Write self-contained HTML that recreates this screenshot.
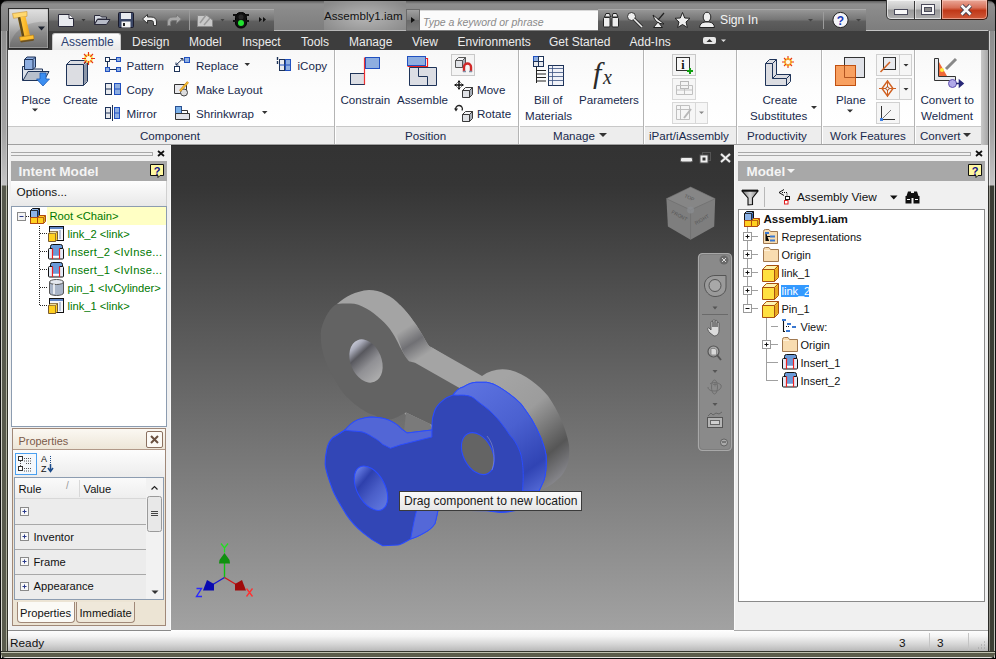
<!DOCTYPE html>
<html><head><meta charset="utf-8">
<style>
*{margin:0;padding:0;box-sizing:border-box}
html,body{width:996px;height:659px;overflow:hidden;background:#000}
body{position:relative;font-family:"Liberation Sans",sans-serif;font-size:12px;color:#000}
.a{position:absolute}
.t{position:absolute;white-space:nowrap;line-height:1}
.tab{top:35.5px;font-size:12px;color:#ececec}
.rl{font-size:11.6px;color:#18294c}
.sep{top:50px;width:2px;height:94px;background:#b4b4b4;border-right:1px solid #fff}
.tr{font-size:11.2px;color:#007800}
.trr{font-size:11px;color:#111}
svg{overflow:visible}
</style></head><body>
<!-- window frame -->
<div class="a" style="left:0;top:0;width:996px;height:659px;border-radius:7px 7px 6px 6px;background:linear-gradient(#5e5e5e,#8e8e8e 3px,#8a8a8a 9px,#7c7c7c 31px,#8a8a8a 60px,#8a8a8a);border:1px solid #111"></div>
<div class="a" style="left:1px;top:31px;width:7px;height:621px;background:linear-gradient(#8e8e8e 0px,#a4a4a4 100px,#c4c4c4 154px,#56584c 155px,#5a5c4e 100%)"></div>
<div class="a" style="left:1px;top:31px;width:1px;height:627px;background:linear-gradient(#a8a8a8,#d8d8d8 154px,#c8c8c0 155px,#d8d8d0)"></div>
<div class="a" style="left:6px;top:31px;width:1px;height:620px;background:linear-gradient(#b0b0b0,#c8c8c8 154px,#b8baa8 155px,#a8aa98)"></div>
<div class="a" style="left:7px;top:31px;width:1px;height:620px;background:linear-gradient(#4a4a4a,#505050 154px,#30322a 155px,#303028)"></div>
<div class="a" style="left:988px;top:31px;width:7px;height:621px;background:linear-gradient(#8e8e8e 0px,#a4a4a4 100px,#c4c4c4 154px,#3a3c34 155px,#3c3e34 100%)"></div>
<div class="a" style="left:988px;top:31px;width:1px;height:620px;background:linear-gradient(#4a4a4a,#505050 154px,#2a2a26 155px,#2a2a26)"></div>
<div class="a" style="left:989px;top:31px;width:1px;height:620px;background:linear-gradient(#d0d0d0,#e4e4e4 154px,#9a9a92 155px,#8a8a82)"></div>
<div class="a" style="left:994px;top:31px;width:1px;height:627px;background:linear-gradient(#a8a8a8,#d0d0d0 154px,#b8b8b0 155px,#c0c0b8)"></div>
<div class="a" style="left:1px;top:651px;width:994px;height:7px;background:linear-gradient(#33352c 0px,#33352c 1px,#c0c2b0 1px,#c0c2b0 2px,#5a5c4a 2px,#5c5e4c 6px,#e4e4e0 6px);border-radius:0 0 5px 5px"></div>
<!-- title glow -->
<div class="a" style="left:324px;top:1px;width:82px;height:30px;background:radial-gradient(ellipse 60% 70% at 50% 55%,#b4b4b4 0%,#a0a0a0 50%,#8a8a8a 100%)"></div>
<div class="a" style="left:274px;top:30px;width:132px;height:1px;background:#b8b8b8"></div>
<div class="t" style="left:324px;top:9.8px;font-size:11.6px;color:#111">Assembly1.iam</div>
<!-- QAT -->
<div class="a" style="left:49px;top:9px;width:225px;height:22px;border-top:1px solid #a8a8a8;background:linear-gradient(#969696,#767676 45%,#5e5e5e 55%,#545454)"></div>
<div class="a" style="left:189px;top:10px;width:1px;height:20px;background:#4a4a4a;border-right:1px solid #9a9a9a"></div>
<svg class="a" style="left:49px;top:9px" width="225" height="22" viewBox="49 9 225 22">
 <!-- new -->
 <path d="M58.5 14.5 H69 L73.5 18.5 V26.5 H58.5 Z" fill="#e8eaef" stroke="#2a2a3a"/>
 <path d="M69 14.5 V18.5 H73.5" fill="#fff" stroke="#2a2a3a"/>
 <path d="M81.5 19 L85.5 19 L83.5 21.5 Z" fill="#3a3a3a"/>
 <!-- open -->
 <path d="M94.5 15.5 H100 L101.5 17 H106.5 V19 H97.5 L94.5 24.5 Z" fill="#d8dce4" stroke="#2a2a3a"/>
 <path d="M97.5 19.5 H110 L106.5 24.5 H94.5 Z" fill="#b8bcc8" stroke="#2a2a3a"/>
 <!-- save -->
 <rect x="118.5" y="12.5" width="15" height="15" rx="1" fill="#3a4666" stroke="#1a1a2a"/>
 <rect x="121" y="13" width="10" height="6" fill="#e8eaef"/>
 <rect x="121.5" y="21.5" width="9" height="6" fill="#f4f4f4"/>
 <rect x="123" y="23" width="2" height="3" fill="#222"/>
 <!-- undo -->
 <path d="M142.5 19 L147.5 14.5 V17 H151 Q156.5 17 156.5 22 V25.5 H153.5 V22.5 Q153.5 20.5 151 20.5 H147.5 V23.5 Z" fill="#eee" stroke="#333"/>
 <!-- redo -->
 <path d="M181.5 19 L176.5 14.5 V17 H173 Q167.5 17 167.5 22 V25.5 H170.5 V22.5 Q170.5 20.5 173 20.5 H176.5 V23.5 Z" fill="#a8a8a8" stroke="#7a7a7a"/>
 <!-- update -->
 <path d="M197.5 15.5 H207 L212.5 20 V26.5 H197.5 Z" fill="#c8c8c8" stroke="#8a8a8a"/>
 <path d="M200 23 L206 15 M204 25 L210 18" stroke="#9a9a9a" stroke-width="1.5"/>
 <path d="M220.5 19 L224.5 19 L222.5 21.5 Z" fill="#444"/>
 <!-- traffic light -->
 <rect x="235.5" y="12.5" width="11" height="15.5" rx="5" fill="#111" stroke="#000"/>
 <path d="M233 15 H236 M246 15 H249 M233 21 H236 M246 21 H249" stroke="#111" stroke-width="2"/>
 <circle cx="241" cy="17" r="2.5" fill="#2a2a2a"/>
 <circle cx="241" cy="23" r="3" fill="#22e030"/>
 <path d="M259 17 L262 19.5 L259 22 Z M263 17 L266 19.5 L263 22 Z" fill="#111"/>
</svg>
<!-- search -->
<div class="a" style="left:406px;top:9px;width:14px;height:22px;border:1px solid #6a6a6a;background:linear-gradient(#a0a0a0,#7c7c7c 50%,#6a6a6a 51%,#7a7a7a)"></div>
<svg class="a" style="left:410px;top:16px" width="6" height="8"><path d="M1 1 L5 4 L1 7 Z" fill="#111"/></svg>
<div class="a" style="left:420px;top:10px;width:178px;height:20px;background:#fbfbfb;border-top:1px solid #d8d8d8"></div>
<div class="t" style="left:423px;top:16.6px;font-size:10.5px;font-style:italic;color:#8a8a8a">Type a keyword or phrase</div>
<div class="a" style="left:598px;top:9px;width:268px;height:22px;border-top:1px solid #a8a8a8;background:linear-gradient(#969696,#767676 45%,#5e5e5e 55%,#545454)"></div>
<div class="a" style="left:823px;top:12px;width:1px;height:17px;background:#4e4e4e;border-right:1px solid #9c9c9c"></div>
<svg class="a" style="left:598px;top:9px" width="268" height="22" viewBox="598 9 268 22">
 <!-- binoculars -->
 <path d="M604.5 17 L606 13.5 H609.5 L610.5 17 Z M612 17 L613 13.5 H616.5 L618 17 Z" fill="#e8e8e8" stroke="#222"/>
 <rect x="603.5" y="17.5" width="6.5" height="9.5" rx="1" fill="#eee" stroke="#222"/>
 <rect x="612" y="17.5" width="6.5" height="9.5" rx="1" fill="#eee" stroke="#222"/>
 <!-- key -->
 <circle cx="631.5" cy="16.5" r="4" fill="#eee" stroke="#333"/>
 <path d="M634 19 L642 27" stroke="#333" stroke-width="3.4"/>
 <path d="M634 19 L642 27" stroke="#eee" stroke-width="1.6"/>
 <!-- satellite -->
 <path d="M653 15 Q655 24 664 24 Z" fill="#eee" stroke="#222"/>
 <path d="M658 20 L664 13" stroke="#222" stroke-width="1.2"/>
 <path d="M653.5 27.5 L658 22 L662.5 27.5 Z" fill="#eee" stroke="#222"/>
 <!-- star -->
 <path d="M682.5 12.5 L684.7 18 L690 18.3 L686 22 L687.4 27.5 L682.5 24.5 L677.6 27.5 L679 22 L675 18.3 L680.3 18 Z" fill="#eee" stroke="#222"/>
 <!-- person -->
 <ellipse cx="707" cy="17" rx="3.8" ry="4.8" fill="#eee" stroke="#222"/>
 <path d="M699.5 27.5 Q700 22.5 705 22 H709 Q714 22.5 714.5 27.5 Z" fill="#eee" stroke="#222"/>
 <path d="M808 19 L813 19 L810.5 21.5 Z" fill="#444"/>
 <!-- help -->
 <circle cx="840.5" cy="20" r="7.6" fill="#f4f4f8" stroke="#222"/>
 <text x="840.5" y="24.5" font-family="Liberation Sans" font-weight="bold" font-size="12" fill="#1838b8" text-anchor="middle">?</text>
 <path d="M856 19 L861 19 L858.5 21.5 Z" fill="#444"/>
</svg>
<div class="t" style="left:720px;top:14px;font-size:12.2px;color:#f4f4f4">Sign In</div>
<!-- window buttons -->
<div class="a" style="left:886px;top:0;width:56px;height:20px;border:1px solid #3a3a3a;border-top:none;border-radius:0 0 0 5px;background:linear-gradient(#e4e4e4,#c4c4c4 45%,#9a9a9a 55%,#b0b0b0);box-shadow:inset 0 0 0 1px rgba(255,255,255,0.6)"></div>
<div class="a" style="left:914px;top:1px;width:1px;height:18px;background:#3a3a3a;box-shadow:1px 0 0 rgba(255,255,255,0.5)"></div>
<div class="a" style="left:941px;top:0;width:47px;height:20px;border:1px solid #3a1a10;border-top:none;border-radius:0 0 5px 0;background:linear-gradient(#eaa898,#d87058 40%,#c03818 55%,#d05a3a);box-shadow:inset 0 0 0 1px rgba(255,220,210,0.5)"></div>
<div class="a" style="left:895px;top:10px;width:12px;height:4px;background:#f8f8f8;box-shadow:0 0 0 1px #4a4a5a"></div>
<div class="a" style="left:922px;top:5px;width:12px;height:9px;border:2px solid #f8f8f8;box-shadow:0 0 0 1px #4a4a5a, inset 0 0 0 1px #4a4a5a;background:#8a8a8a"></div>
<svg class="a" style="left:959px;top:4px" width="14" height="12"><path d="M2.5 1.5 L11.5 10.5 M11.5 1.5 L2.5 10.5" stroke="#3a3a4a" stroke-width="4.4"/><path d="M2.5 1.5 L11.5 10.5 M11.5 1.5 L2.5 10.5" stroke="#f8f8f8" stroke-width="2.6"/></svg>
<div class="a" style="left:866px;top:30px;width:122px;height:1px;background:#c4c4c4"></div>
<!-- tab row -->
<div class="a" style="left:8px;top:31px;width:980px;height:19px;background:#3d3d3d"></div>
<div class="a" style="left:52px;top:33px;width:69px;height:18px;border-radius:3px 3px 0 0;background:linear-gradient(#fdfdfd,#e6e6e6);border:1px solid #c8c8c8;border-bottom:none"></div>
<div class="t tab" style="left:61px;top:35.5px;color:#2a4070">Assemble</div>
<div class="t tab" style="left:132px">Design</div>
<div class="t tab" style="left:189px">Model</div>
<div class="t tab" style="left:242px">Inspect</div>
<div class="t tab" style="left:301px">Tools</div>
<div class="t tab" style="left:349px">Manage</div>
<div class="t tab" style="left:412px">View</div>
<div class="t tab" style="left:457.5px">Environments</div>
<div class="t tab" style="left:549px">Get Started</div>
<div class="t tab" style="left:629.5px">Add-Ins</div>
<svg class="a" style="left:702px;top:36px" width="28" height="10"><rect x="1" y="1" width="13" height="7" rx="2" fill="#e8e8e8"/><path d="M4.5 6 L7.5 3 L10.5 6 Z" fill="#333"/><path d="M19 3.5 L24 3.5 L21.5 6 Z" fill="#ddd"/></svg>
<!-- app button -->
<div class="a" style="left:8px;top:8px;width:41px;height:41px;background:linear-gradient(#e0e0e0 0%,#c4c4c4 35%,#a0a0a0 60%,#7c7c7c 100%);border:1px solid #2a2a2a"></div>
<svg class="a" style="left:8px;top:8px" width="41" height="41" viewBox="8 8 41 41">
 <defs><clipPath id="abc"><rect x="9" y="9" width="39" height="39"/></clipPath>
 <linearGradient id="ig" x1="0" y1="0" x2="1" y2="0"><stop offset="0" stop-color="#ffd060"/><stop offset="0.5" stop-color="#ffc030"/><stop offset="1" stop-color="#e8a020"/></linearGradient></defs>
 <g clip-path="url(#abc)">
  <path d="M9 48 C12 30 28 20 48 22 L48 48 Z" fill="#000" opacity="0.12"/>
  <rect x="9" y="9" width="39" height="39" fill="none" stroke="#bdbdbd" stroke-width="1"/>
 </g>
  <path d="M12.5 13.5 L27 11.5 L27 16.3 L13.5 18.3 Z" fill="#ffd870" stroke="#c89030" stroke-width="0.6"/>
 <path d="M17.8 17.5 L25.5 16.4 L30.2 36 L22 37.2 Z" fill="url(#ig)"/>
 <path d="M17.8 17.5 L20.3 17.1 L24.5 36.8 L22 37.2 Z" fill="#3a2c10" opacity="0.8"/>
 <path d="M19.5 37 L33.5 35 L34 39 L20.3 41 Z" fill="#ffc030" stroke="#b07818" stroke-width="0.6"/>
 <path d="M20.3 41 L34 39 L33.6 40.8 L21 42.6 Z" fill="#6a4a10" opacity="0.85"/>
 <path d="M38 26.5 L45 26.5 L41.5 30.5 Z" fill="#1e2430"/>
</svg>
<!-- ribbon body -->
<div class="a" style="left:8px;top:50px;width:973px;height:77px;background:linear-gradient(#f8f8f8,#fdfdfd 50%,#fff)"></div>
<div class="a" style="left:8px;top:126px;width:973px;height:19px;background:#ededed;border-top:1px solid #c8c8c8;border-bottom:1px solid #a0a0a0"></div>
<div class="a" style="left:981px;top:50px;width:7px;height:95px;background:linear-gradient(90deg,#c8c8c8,#a8a8a8)"></div>
<!-- separators -->
<div class="a sep" style="left:334px"></div>
<div class="a sep" style="left:518px"></div>
<div class="a sep" style="left:643px"></div>
<div class="a sep" style="left:736px"></div>
<div class="a sep" style="left:821px"></div>
<div class="a sep" style="left:914px"></div>
<!-- panel labels -->
<div class="t rl" style="left:140px;top:129.7px">Component</div>
<div class="t rl" style="left:405px;top:129.7px">Position</div>
<div class="t rl" style="left:553px;top:129.7px">Manage</div>
<div class="t rl" style="left:649px;top:129.7px">iPart/iAssembly</div>
<div class="t rl" style="left:747px;top:129.7px">Productivity</div>
<div class="t rl" style="left:830px;top:129.7px">Work Features</div>
<div class="t rl" style="left:920px;top:129.7px">Convert</div>
<svg class="a" style="left:598px;top:131px" width="10" height="8"><path d="M1 2 L9 2 L5 6 Z" fill="#333"/></svg>
<svg class="a" style="left:962px;top:131px" width="10" height="8"><path d="M1 2 L9 2 L5 6 Z" fill="#333"/></svg>
<!-- big labels -->
<div class="t rl" style="left:21.5px;top:93.7px">Place</div>
<div class="t rl" style="left:63px;top:93.7px">Create</div>
<div class="t rl" style="left:340.5px;top:93.7px">Constrain</div>
<div class="t rl" style="left:397px;top:93.7px">Assemble</div>
<div class="t rl" style="left:534px;top:93.7px">Bill of</div>
<div class="t rl" style="left:525px;top:109.5px">Materials</div>
<div class="t rl" style="left:579px;top:93.7px">Parameters</div>
<div class="t rl" style="left:762.5px;top:93.7px">Create</div>
<div class="t rl" style="left:750px;top:109.5px">Substitutes</div>
<div class="t rl" style="left:836px;top:93.7px">Plane</div>
<div class="t rl" style="left:920.5px;top:93.7px">Convert to</div>
<div class="t rl" style="left:921px;top:109.5px">Weldment</div>
<!-- small labels -->
<div class="t rl" style="left:126.5px;top:60px">Pattern</div>
<div class="t rl" style="left:126.5px;top:83.7px">Copy</div>
<div class="t rl" style="left:126.5px;top:107.7px">Mirror</div>
<div class="t rl" style="left:196px;top:60px">Replace</div>
<div class="t rl" style="left:196px;top:83.7px">Make Layout</div>
<div class="t rl" style="left:196px;top:107.7px">Shrinkwrap</div>
<div class="t rl" style="left:297.5px;top:60px">iCopy</div>
<div class="t rl" style="left:477px;top:83.7px">Move</div>
<div class="t rl" style="left:477px;top:107.7px">Rotate</div>
<svg class="a" style="left:0;top:50px" width="996" height="77" viewBox="0 50 996 77">
 <!-- dropdown arrows -->
 <path d="M32 108.5 H38 L35 111.5 Z M244.5 63 H250 L247.3 66 Z M262 111 H267.5 L264.7 114 Z M811 106 H817 L814 109 Z M847 109.5 H853 L850 112.5 Z" fill="#333"/>
 <!-- Place icon -->
 <path d="M22.5 66.5 H31 L33 69 H42.5 V80.5 H22.5 Z" fill="#dde2ea" stroke="#1e3358"/>
 <path d="M23 80.5 L28 71.5 H49 L44 80.5 Z" fill="#b8c0cc" stroke="#1e3358"/>
 <path d="M24.5 59.5 L27 57 H35.5 V67 L33 69.5 H24.5 Z" fill="#8eaee0" stroke="#1e3358"/>
 <path d="M24.5 59.5 H33 L35.5 57 M33 59.5 V69.5" fill="none" stroke="#1e3358"/>
 <path d="M40 73 H46 V79 H49.5 L43 86 L36.5 79 H40 Z" fill="#3c8ef0" stroke="#1a5ab8" stroke-width="0.8"/>
 <!-- Create icon -->
 <path d="M66.5 64.5 L70.5 60.5 H87.5 V81.5 L83.5 85.5 H66.5 Z" fill="#dcdde2" stroke="#1e3358"/>
 <path d="M66.5 64.5 H83.5 L87.5 60.5 M83.5 64.5 V85.5" fill="none" stroke="#1e3358"/>
 <path d="M84 65 L87 62 V81 L84 84.5 Z" fill="#8c96a8"/>
 <circle cx="88.5" cy="58.5" r="4.5" fill="#ffec40"/>
 <path d="M88.5 52 V65 M82 58.5 H95 M84 54 L93 63 M93 54 L84 63" stroke="#e83818" stroke-width="1.2"/>
 <circle cx="88.5" cy="58.5" r="2.5" fill="#fffbe0"/>
 <!-- Pattern -->
 <rect x="105.5" y="57.5" width="4" height="4" fill="#fff" stroke="#1e3358"/>
 <rect x="116.5" y="57.5" width="4" height="4" fill="#8eaee0" stroke="#2050c0"/>
 <rect x="105.5" y="67.5" width="4" height="4" fill="#8eaee0" stroke="#2050c0"/>
 <rect x="116.5" y="67.5" width="4" height="4" fill="#8eaee0" stroke="#2050c0"/>
 <path d="M110 59.5 H116 M110 69.5 H116 M107.5 62 V67" stroke="#1e3358"/>
 <!-- Copy -->
 <rect x="105.5" y="83.5" width="6" height="11" fill="#e8eaee" stroke="#1e3358"/>
 <path d="M105.5 89 H111.5" stroke="#1e3358"/>
 <rect x="114.5" y="83.5" width="6" height="11" fill="#8eaee0" stroke="#2050c0"/>
 <path d="M114.5 89 H120.5" stroke="#2050c0"/>
 <!-- Mirror -->
 <rect x="105.5" y="107.5" width="5" height="11" fill="#e8eaee" stroke="#1e3358"/>
 <path d="M105.5 113 H110.5" stroke="#1e3358"/>
 <rect x="114.5" y="107.5" width="5" height="11" fill="#8eaee0" stroke="#2050c0"/>
 <path d="M114.5 113 H119.5" stroke="#2050c0"/>
 <path d="M112.5 105 V121" stroke="#1e3358"/>
 <!-- Replace -->
 <rect x="174.5" y="66.5" width="5" height="5" fill="#fff" stroke="#1e3358"/>
 <rect x="184.5" y="57.5" width="5" height="5" fill="#8eaee0" stroke="#2050c0"/>
 <path d="M176 65 L183 58.5 M176 65 V62.5 M176 65 H178.5 M183 58.5 H180.5 M183 58.5 V61" stroke="#1e3358"/>
 <!-- Make layout -->
 <path d="M174.5 84.5 H186.5 V93.5 H174.5 Z" fill="#e8e8ec" stroke="#333"/>
 <circle cx="184" cy="92.5" r="3.5" fill="#ddd" stroke="#444"/>
 <path d="M180 91 L188 82" stroke="#c88020" stroke-width="2.4"/>
 <path d="M180 91 L188 82" stroke="#f4c030" stroke-width="1.2"/>
 <!-- Shrinkwrap -->
 <rect x="175.5" y="106.5" width="6" height="7" fill="#7ab0e8" stroke="#2a5090"/>
 <path d="M175.5 113.5 H189.5 V119.5 H175.5 Z" fill="#e0e2e8" stroke="#333"/>
 <path d="M181.5 110.5 H187.5 V113.5" fill="none" stroke="#333"/>
 <!-- iCopy -->
 <path d="M277.5 57 V60 M277.5 61 V64" stroke="#1e3358" stroke-width="1.4"/>
 <rect x="279.5" y="59.5" width="5" height="11" fill="#e8eaee" stroke="#1e3358"/>
 <rect x="285.5" y="59.5" width="5" height="11" fill="#8eaee0" stroke="#2050c0"/>
 <path d="M279.5 65 H290.5" stroke="#2050c0"/>
 <!-- Constrain -->
 <rect x="350.5" y="73.5" width="14" height="11" fill="#dcdee4" stroke="#1e3358"/>
 <rect x="365.5" y="57.5" width="14" height="11" fill="#8eaee0" stroke="#2050c0"/>
 <path d="M364.5 57.5 V84.5" stroke="#f03030" stroke-width="1.2"/>
 <!-- Assemble -->
 <path d="M409.5 67.5 H436.5 V85.5 H409.5 Z" fill="#dcdee4" stroke="#1e3358"/>
 <path d="M418.5 67.5 V76.5 H427.5 V85.5" fill="none" stroke="#1e3358"/>
 <rect x="407.5" y="56.5" width="18" height="9" fill="#8eaee0" stroke="#2050c0"/>
 <path d="M407.5 66.5 H427.5 V58.5 H425.5" fill="none" stroke="#f02020" stroke-width="1.2"/>
 <!-- magnet button -->
 <rect x="451.5" y="54.5" width="23" height="21" fill="#f4f4f4" stroke="#c8c8c8"/>
 <path d="M455.5 60.5 H462.5 V67.5 H455.5 Z" fill="#e0e2e6" stroke="#555"/><path d="M455.5 60.5 L458.5 57.5 H465.5 L462.5 60.5 Z" fill="#f4f4f6" stroke="#555"/><path d="M462.5 60.5 L465.5 57.5 V64.5 L462.5 67.5 Z" fill="#a8aeb8" stroke="#555"/>
 <path d="M464 72 V67 A3.5 3.5 0 0 1 471 67 V72" fill="none" stroke="#d02828" stroke-width="2.4"/>
 <path d="M463 71.5 H466 M469 71.5 H472" stroke="#8090a8" stroke-width="1.4"/>
 <!-- move -->
 <path d="M459 80.5 V89.5 M454.5 85 H463.5" stroke="#111" stroke-width="1.4"/>
 <path d="M457.5 82.5 L459 81 L460.5 82.5 M457.5 87.5 L459 89 L460.5 87.5 M456.5 83.5 L455 85 L456.5 86.5 M461.5 83.5 L463 85 L461.5 86.5" fill="none" stroke="#111"/>
 <path d="M462.5 90.5 H469.5 V97.5 H462.5 Z" fill="#e0e2e6" stroke="#3a3a3a"/><path d="M462.5 90.5 L465.5 87.5 H472.5 L469.5 90.5 Z" fill="#f4f4f6" stroke="#3a3a3a"/><path d="M469.5 90.5 L472.5 87.5 V94.5 L469.5 97.5 Z" fill="#a8aeb8" stroke="#3a3a3a"/>
 <!-- rotate -->
 <path d="M455.8 110 A3.4 3.4 0 1 1 462 110.5" fill="none" stroke="#222" stroke-width="1.3"/><path d="M454 108.5 L456 111.5 L458 108.5 Z" fill="#222"/>
 <path d="M462.5 114.5 H469.5 V121.5 H462.5 Z" fill="#e0e2e6" stroke="#3a3a3a"/><path d="M462.5 114.5 L465.5 111.5 H472.5 L469.5 114.5 Z" fill="#f4f4f6" stroke="#3a3a3a"/><path d="M469.5 114.5 L472.5 111.5 V118.5 L469.5 121.5 Z" fill="#a8aeb8" stroke="#3a3a3a"/>
 <!-- BOM -->
 <rect x="533.5" y="56.5" width="5" height="5" fill="#8eaee0" stroke="#2050c0"/>
 <rect x="538.5" y="56.5" width="5" height="5" fill="#fff" stroke="#1e3358"/>
 <rect x="533.5" y="61.5" width="5" height="5" fill="#e8eaee" stroke="#1e3358"/>
 <rect x="538.5" y="61.5" width="5" height="5" fill="#e8eaee" stroke="#1e3358"/>
 <path d="M536.5 67 V83 M536.5 70.5 H546 M536.5 74 H546 M536.5 77.5 H546 M536.5 81 H546" stroke="#222"/>
 <rect x="548.5" y="65.5" width="15" height="20" fill="#f0f2f8" stroke="#1e3358"/>
 <path d="M548.5 68.5 H563.5 M548.5 72.5 H563.5 M548.5 76.5 H563.5 M548.5 80.5 H563.5 M552.5 65.5 V85.5" stroke="#3a5080" stroke-width="0.8"/>
 <!-- fx -->
 <text x="593" y="83" font-family="Liberation Serif" font-style="italic" font-size="30" fill="#2a2a2a">f</text>
 <text x="603" y="84" font-family="Liberation Serif" font-style="italic" font-size="20" fill="#2a2a2a">x</text>
 <!-- iPart buttons -->
 <rect x="672.5" y="54.5" width="23" height="21" fill="#f4f4f4" stroke="#c8c8c8"/>
 <rect x="676.5" y="57.5" width="13" height="13" fill="#f8f8f8" stroke="#333"/>
 <text x="683" y="68.5" font-family="Liberation Serif" font-weight="bold" font-size="12" fill="#111" text-anchor="middle">i</text>
 <path d="M690 68 V74 M687 71 H693" stroke="#10a010" stroke-width="2"/>
 <rect x="672.5" y="78.5" width="23" height="21" fill="#f6f6f6" stroke="#d8d8d8"/>
 <rect x="680.5" y="81.5" width="8" height="7" fill="#f4f4f4" stroke="#b8b8b8"/>
 <path d="M676.5 85.5 H692.5 V94.5 H676.5 Z M676.5 90 H692.5 M684.5 88.5 V94.5" fill="none" stroke="#c0c0c0"/>
 <rect x="672.5" y="102.5" width="35" height="21" fill="#f6f6f6" stroke="#d8d8d8"/>
 <path d="M695.5 102.5 V123.5" stroke="#d8d8d8"/>
 <path d="M676.5 105.5 H689.5 V119.5 H676.5 Z M676.5 109.5 H689.5 M680.5 105.5 V119.5" fill="none" stroke="#c0c0c0"/>
 <path d="M684 118 L691 109" stroke="#b8b8b8" stroke-width="2"/>
 <path d="M699 111.5 H704 L701.5 114 Z" fill="#888"/>
 <!-- Create substitutes -->
 <path d="M765.5 63.5 L769.5 59.5 H776.5 V74.5 H790.5 V81.5 L786.5 85.5 H765.5 Z" fill="#dcdde2" stroke="#1e3358"/>
 <path d="M765.5 63.5 H772.5 L776.5 59.5 M772.5 63.5 V78.5 H786.5 V85.5 M772.5 78.5 L776.5 74.5 M786.5 78.5 L790.5 74.5" fill="none" stroke="#1e3358"/>
 <circle cx="788" cy="62" r="4.2" fill="#ffec40"/>
 <path d="M788 56 V68 M782 62 H794 M784 58 L792 66 M792 58 L784 66" stroke="#e83818" stroke-width="1.1"/>
 <circle cx="788" cy="62" r="2.3" fill="#fffbe0"/>
 <!-- Plane -->
 <rect x="844.5" y="57.5" width="20" height="20" fill="#e0e2e8" stroke="#333"/>
 <rect x="835.5" y="65.5" width="20" height="20" fill="#f8a060" stroke="#c05010"/>
 <path d="M844.5 65.5 V77.5 H855.5" fill="none" stroke="#a04010" stroke-width="0.8"/>
 <!-- work feature small buttons -->
 <rect x="876.5" y="54.5" width="35" height="21" fill="#f6f6f6" stroke="#d0d0d0"/>
 <path d="M899.5 54.5 V75.5" stroke="#d0d0d0"/>
 <rect x="883.5" y="57.5" width="12" height="12" fill="#e8eaee" stroke="#333"/>
 <path d="M880.5 72 L890 62" stroke="#d06020" stroke-width="1.5"/>
 <path d="M903.5 64 H908.5 L906 66.5 Z" fill="#333"/>
 <rect x="876.5" y="78.5" width="35" height="21" fill="#f6f6f6" stroke="#d0d0d0"/>
 <path d="M899.5 78.5 V99.5" stroke="#d0d0d0"/>
 <path d="M887.5 81 L893 88.5 L887.5 96 L882 88.5 Z" fill="none" stroke="#d06020" stroke-width="1.4"/>
 <path d="M887.5 80 V97 M879 88.5 H896" stroke="#d06020" stroke-width="1"/>
 <circle cx="887.5" cy="88.5" r="1.6" fill="#fff" stroke="#a04010"/>
 <path d="M903.5 88 H908.5 L906 90.5 Z" fill="#333"/>
 <rect x="876.5" y="102.5" width="23" height="21" fill="#f6f6f6" stroke="#d0d0d0"/>
 <path d="M881.5 106 V119.5 H895" fill="none" stroke="#333"/>
 <path d="M881.5 119.5 L891 110" stroke="#555" stroke-width="0.8"/>
 <rect x="880" y="118" width="3" height="3" fill="#4080e0"/>
 <!-- Convert to weldment -->
 <path d="M934.5 58.5 H938.5 V76.5 H955.5 V80.5 H934.5 Z" fill="#e8eaee" stroke="#333"/>
 <path d="M939 62 L947 76 H939 Z" fill="#f06838"/>
 <path d="M946 69 L956 59" stroke="#888" stroke-width="3"/>
 <circle cx="942" cy="70" r="2" fill="#ffec40"/>
 <circle cx="952.5" cy="83.5" r="4" fill="#b0a8e8" stroke="#6050b0"/>
 <path d="M956 83.5 H962 M959.5 80.5 L963 83.5 L959.5 86.5 Z" stroke="#282878" stroke-width="1.6" fill="#282878"/>
</svg>
<!-- viewport -->
<div class="a" style="left:171px;top:145px;width:563px;height:485px;background:linear-gradient(#333 0%,#353535 8%,#a2a2a2 100%);border-top:1px solid #2a2a2a"></div>
<svg class="a" style="left:171px;top:145px" width="563" height="485" viewBox="171 145 563 485">
 <defs>
  <linearGradient id="gth" gradientUnits="userSpaceOnUse" x1="500" y1="380" x2="575" y2="470"><stop offset="0" stop-color="#a4a4a4"/><stop offset="0.35" stop-color="#9c9c9c"/><stop offset="0.75" stop-color="#565656"/><stop offset="1" stop-color="#8c8c92"/></linearGradient>
  <linearGradient id="gneck" gradientUnits="userSpaceOnUse" x1="404" y1="329" x2="422" y2="357"><stop offset="0" stop-color="#a4a4a4"/><stop offset="0.5" stop-color="#707074"/><stop offset="1" stop-color="#a4a4a4"/></linearGradient>
  <linearGradient id="grl" gradientUnits="userSpaceOnUse" x1="520" y1="395" x2="575" y2="480"><stop offset="0" stop-color="#a2a2a2"/><stop offset="0.35" stop-color="#8e8e8e"/><stop offset="0.7" stop-color="#545454"/><stop offset="1" stop-color="#8c8c94"/></linearGradient>
  <linearGradient id="ghole" gradientUnits="userSpaceOnUse" x1="358" y1="340" x2="374" y2="383"><stop offset="0" stop-color="#c8cad8"/><stop offset="0.12" stop-color="#a8aab8"/><stop offset="0.3" stop-color="#58585e"/><stop offset="0.6" stop-color="#909094"/><stop offset="1" stop-color="#b0b0b0"/></linearGradient>
  <linearGradient id="brl" gradientUnits="userSpaceOnUse" x1="470" y1="385" x2="545" y2="490"><stop offset="0" stop-color="#5c72e0"/><stop offset="0.45" stop-color="#4a60d0"/><stop offset="0.8" stop-color="#3044b4"/><stop offset="1" stop-color="#566cd8"/></linearGradient>
  <linearGradient id="bhole" gradientUnits="userSpaceOnUse" x1="362" y1="467" x2="380" y2="510"><stop offset="0" stop-color="#6a80e8"/><stop offset="0.28" stop-color="#2e40ac"/><stop offset="0.6" stop-color="#4a5ec8"/><stop offset="1" stop-color="#6078e0"/></linearGradient>
 </defs>
 <!-- gray link -->
 <path d="M337 304 C345 297 355 291 369 290 C380 290 392 296 400 305 C410 315 418 327 423 336 C427 343 429 347 431 347 L461 364 L482 376 C490 370 500 368 510 370 C525 374 540 386 548 396 C558 410 566 428 569 445 C570 458 568 468 562 475 C556 482 548 487 543 489 L480 470 L410 420 L337 330 Z" fill="url(#gth)"/>
 <path d="M400 305 C410 315 418 327 423 336 C427 343 429 347 431 347 L446 356 L418 364 L409.1 361.3 C406 358 404 354 402 350 L392 322 Z" fill="url(#gneck)"/>
 
 <path d="M337 304 C330 307 324 318 321 330 C320 342 322 355 330 371 C337 385 345 396 348 398 C356 406 366 413 374 415 C380 418 385 419.5 389 419.5 C395 419 399 416 401 415 L406 412.6 L430 424 L470 440 L520 420 L457.7 387 L415 362.8 L409 361.3 C405 357 402 350 400 347 C396 338 390 327 381 319.5 C372 311 360 303 349.5 303.5 C344 303.5 340 303 337 304 Z" fill="#636363"/>
 <path d="M404 431.6 L406 412.6 L430.3 424 L432 430 L413.7 434.6 Z" fill="#7a7a7a"/>
 <ellipse cx="366" cy="361" rx="15.5" ry="22.5" transform="rotate(-22 366 361)" fill="url(#ghole)"/>
 <!-- blue link silhouette -->
 <path d="M326.7 449.8 C328 443 330 440 332.8 437.7 L345 430 C350 424 356 419.5 361.6 418.7 C366 417.3 370 417 373.7 417.2 C380 417.5 385 418.5 389 420.2 C395 423 399 426 401 428.6 L407 433 L431.9 430 C432 425 432.3 420 432.6 418 C434 412 435 409 436.4 407.3 C440 402 447 397 453 395 C456 391 459 388 463.7 386.8 C468 384 472 382.5 476 382.3 L486.5 382.3 C491 383 495 384.5 500 387.6 C507 392 514 397 521 404 C525 409 528 414 531.6 419.2 C535 425 538 431 540.7 437.4 C543 443 545 449 546 455 C546.5 462 546 470 545.2 474.9 C544.5 479 543.5 482 542.2 484 L539 491 L530 505 C520 510 510 512.5 500 512.4 L486.5 510.8 L438 510 C437 515 436 520 434.9 523.7 C432 528 428 531 424.3 532.8 C419 536 414 538 410.6 539 C405 542 400 545 398 545 L382.8 545.7 C375 542 368 537 363.1 532.8 C356 527 350 520 346.4 514.6 C341 506 336 498 332.8 490.3 C329 480 326 472 325.2 465 C325 458 326 453 326.7 449.8 Z" fill="#3246b6" stroke="#2a4cff" stroke-width="1.1"/>
 <!-- left lobe top band + bar band -->
 <path d="M332.8 437.7 L345 430 C350 424 356 419.5 361.6 418.7 C366 417.3 370 417 373.7 417.2 C380 417.5 385 418.5 389 420.2 C395 423 399 426 401 428.6 L407 433 L431.9 430 L431.9 437 L400 445 L390.4 448.3 C386 446 384 445 382.8 444.5 C378 440 376 439 373.7 437.7 C368 434 364 432 360 431.6 C354 431 349 431 344.9 430 Z" fill="#5266d6" stroke="#2a4cff" stroke-width="1"/>
 <!-- right lobe band -->
 <path d="M453 395 C456 391 459 388 463.7 386.8 C468 384 472 382.5 476 382.3 L486.5 382.3 C491 383 495 384.5 500 387.6 C507 392 514 397 521 404 C525 409 528 414 531.6 419.2 C535 425 538 431 540.7 437.4 C543 443 545 449 546 455 C546.5 462 546 470 545.2 474.9 C544.5 479 543.5 482 542.2 484 L539 491 L522.5 491 C523 485 523.3 478 523.2 473.4 C523 465 522 460 521 455 C519.5 450 518 447 516.4 444 C514 440 512 437 510.3 435.9 C507 431 505 428 502.8 425.3 C499 420 495 416 492.1 413.1 C488 409 484 406 480 403.2 C476 400 474 398 471.3 396.7 C467 395 462 395 457.7 395.2 Z" fill="url(#brl)" stroke="#2a4cff" stroke-width="1"/>
 <path d="M416.7 510 L438 510 C437 515 436 520 434.9 523.7 C432 528 428 531 424.3 532.8 C419 536 414 538 410.6 539 C412 532 414 520 416.7 510 Z" fill="#5468d8" stroke="#2a4cff" stroke-width="1"/>
 <ellipse cx="371" cy="488.2" rx="14" ry="24" transform="rotate(-28 371 488.2)" fill="url(#bhole)" stroke="#2a4cff" stroke-width="1.1"/>
 <ellipse cx="477.8" cy="453.6" rx="14.5" ry="22.3" transform="rotate(-27 477.8 453.6)" fill="#646464" stroke="#2a4cff" stroke-width="1.1"/>
 <path d="M487 436 C494 444 496 458 492 470" fill="none" stroke="#c8c8d8" stroke-width="1" opacity="0.35"/>
<!-- axis triad -->
 <path d="M224.5 577.5 V562" stroke="#10c010" stroke-width="1.4"/>
 <path d="M224.5 577.5 L212 585" stroke="#1818d0" stroke-width="1.4"/>
 <path d="M224.5 577.5 L237 585" stroke="#d01818" stroke-width="1.4"/>
 <path d="M224.5 553 L229.5 560 L230 563.5 H219 L219.5 560 Z" fill="#109010"/>
 <path d="M203 590.5 L207 580 L214 584 V590.5 Z" fill="#0a0ab0"/>
 <path d="M246 590.5 L242 580 L235 584 V590.5 Z" fill="#a00a0a"/>
 <path d="M221 543.5 L224.5 548 L228 543.5 M224.5 548 V552.5" fill="none" stroke="#20e020" stroke-width="1.3"/>
 <path d="M196.5 588.5 H201.5 L196.5 596.5 H202" fill="none" stroke="#2a2aff" stroke-width="1.4"/>
 <path d="M246.5 588.5 L252.5 596.5 M252.5 588.5 L246.5 596.5" fill="none" stroke="#ff3030" stroke-width="1.3"/>
 <!-- view cube -->
 <path d="M690.6 187 L715.2 198.7 L714.2 226.4 L690.6 239.7 L667.9 226.4 L666.4 198.7 Z" fill="#7e7e7e"/>
 <path d="M690.6 187 L715.2 198.7 L690.6 210 L666.4 198.7 Z" fill="#868686" stroke="#6a6a6a" stroke-width="0.6"/>
 <path d="M690.6 210 V239.7" stroke="#6a6a6a" stroke-width="0.6"/>
 <circle cx="690.6" cy="210" r="3.5" fill="#8a8c90" opacity="0.8"/>
 <text x="0" y="0" font-family="Liberation Sans" font-size="5" fill="#555" transform="translate(684 197) rotate(25)">TOP</text>
 <text x="0" y="0" font-family="Liberation Sans" font-size="5" fill="#555" transform="translate(671 213) rotate(28)">FRONT</text>
 <text x="0" y="0" font-family="Liberation Sans" font-size="5" fill="#555" transform="translate(696 225) rotate(-30)">RIGHT</text>
 <!-- viewport window controls -->
 <rect x="680.5" y="157.5" width="12" height="4.5" rx="1.5" fill="#eee" stroke="#555"/>
 <rect x="702.5" y="152.5" width="8" height="8" fill="none" stroke="#555" stroke-width="1"/>
 <rect x="700" y="155" width="8" height="8" fill="#eee" stroke="#555"/>
 <rect x="702.5" y="157.5" width="3" height="3" fill="#333"/>
 <path d="M721 154 L730 162 M730 154 L721 162" stroke="#555" stroke-width="3.2"/>
 <path d="M721 154 L730 162 M730 154 L721 162" stroke="#f0f0f0" stroke-width="1.8"/>
 <!-- nav bar -->
 <rect x="698.5" y="253.5" width="33" height="197" rx="4" fill="#8a8a8a" stroke="#a8a8a8" stroke-width="1.2"/>
 <rect x="699.5" y="254.5" width="31" height="195" rx="3.5" fill="none" stroke="#6a6a6a" stroke-width="0.6" opacity="0.6"/>
 <circle cx="724" cy="260" r="4.5" fill="#6a6a6a"/>
 <path d="M722 258 L726 262 M726 258 L722 262" stroke="#ddd" stroke-width="1"/>
 <path d="M704.5 285 C704.5 279 710 275.5 715 275.5 H726 V287 C726 293 721 296.5 715 296.5 C709 296.5 704.5 291 704.5 285 Z" fill="#9a9a9a" stroke="#555" stroke-width="1"/>
 <circle cx="715" cy="285.5" r="6" fill="#a8a8a8" stroke="#555"/>
 <path d="M712.5 306.5 H717.5 L715 309.5 Z" fill="#555"/>
 <path d="M702 314.5 H728" stroke="#6a6a6a"/>
 <path d="M710 333 C707 330 707 327 709 328 L711 330 V322 C711 321 713 321 713 322 V327 V320.5 C713 319.5 715 319.5 715 320.5 V327 V321 C715 320 717 320 717 321 V327 V323 C717 322 719 322 719 323 V330 C719 334 717 336 714 336 Z" fill="#dcdcdc" stroke="#555" stroke-width="0.9"/>
 <circle cx="713.5" cy="351.5" r="5.5" fill="#a8a8a8" stroke="#555" stroke-width="1.2"/><path d="M711 348.5 H715 L716.5 350 V355 H711 Z" fill="#d8d8d8" stroke="#666" stroke-width="0.6"/>
 <path d="M717 355 L721 360" stroke="#555" stroke-width="2"/>
 <path d="M712.5 370 H717.5 L715 373 Z" fill="#555"/>
 <ellipse cx="714.5" cy="387" rx="3" ry="7" fill="none" stroke="#6e6e6e" stroke-width="1"/>
 <path d="M710 384 C712 382 718 382 721 385 C722 388 719 391 715 391 C711 391 708 390 708 387" fill="none" stroke="#6e6e6e"/>
 <path d="M713 384.5 H717 M715 382.5 V386.5" stroke="#6e6e6e" stroke-width="0.8"/>
 <path d="M712.5 403 H717.5 L715 406 Z" fill="#555"/>
 <rect x="707.5" y="417.5" width="15" height="10" fill="#b4b4b4" stroke="#555"/>
 <rect x="710.5" y="420.5" width="9" height="4" fill="#d0d0d0" stroke="#666"/>
 <path d="M708 416 L711 413 L713 415 L716 413 L719 414 L722 412" fill="none" stroke="#666"/>
 <circle cx="724" cy="442.5" r="3.5" fill="#aaa" stroke="#555" stroke-width="0.8"/>
 <path d="M722 442 H726" stroke="#444"/>
</svg>
<!-- tooltip -->
<div class="a" style="left:399px;top:491px;width:183px;height:20px;background:linear-gradient(#fafafa,#e6e6e6);border:1px solid #3a3a3a"></div>
<div class="t" style="left:404px;top:495.2px;font-size:12.1px;line-height:1;color:#181818">Drag component to new location</div>
<!-- left panel -->
<div class="a" style="left:8px;top:145px;width:163px;height:485px;background:#f0f0f0;border-left:1px solid #fafafa;border-right:1px solid #fafafa"></div>
<div class="a" style="left:11px;top:152px;width:142px;height:1px;background:#a8a8a8"></div><div class="a" style="left:11px;top:155px;width:142px;height:1px;background:#a8a8a8"></div><div class="a" style="left:152px;top:152px;width:1px;height:4px;background:#a8a8a8"></div>
<svg class="a" style="left:157px;top:150px" width="8" height="7"><path d="M1 1 L7 6 M7 1 L1 6" stroke="#111" stroke-width="1.8"/></svg>
<div class="a" style="left:11px;top:161px;width:156px;height:20px;background:#a8a8a8"></div>
<div class="t" style="left:18.5px;top:164.5px;font-size:13.6px;font-weight:bold;color:#f4f4f4;line-height:1">Intent Model</div>
<svg class="a" style="left:149px;top:163px" width="16" height="16"><path d="M1.5 1.5 H14.5 V12.5 H11 L9 14.5 V12.5 H1.5 Z" fill="#fff8a0" stroke="#111"/><text x="8" y="11.5" font-family="Liberation Sans" font-weight="bold" font-size="11" fill="#10108a" text-anchor="middle">?</text></svg>
<div class="a" style="left:11px;top:181px;width:156px;height:25px;background:linear-gradient(#fdfdfd,#e8e8e8);border-right:1px solid #d0d0d0"></div>
<div class="t" style="left:16.5px;top:187px;font-size:11.8px;line-height:1;color:#111">Options...</div>
<div class="a" style="left:11px;top:206px;width:156px;height:221px;background:#fff;border:1px solid #8c9cb0"></div>
<div class="a" style="left:47px;top:207px;width:119px;height:18px;background:#ffffc4"></div>
<svg class="a" style="left:11px;top:206px" width="60" height="110" viewBox="11 206 60 110">
 <rect x="17.5" y="212.5" width="8" height="8" fill="#f4f4f4" stroke="#8a8a8a"/>
 <path d="M19.5 216.5 H23.5" stroke="#2a3a8a"/>
 <path d="M26 216.5 H30" stroke="#222" stroke-dasharray="1 1"/>
 <path d="M39.5 226 V306" stroke="#222" stroke-dasharray="1 1"/>
 <path d="M40 233.5 H48 M40 251.5 H48 M40 269.5 H48 M40 287.5 H48 M40 305.5 H48" stroke="#222" stroke-dasharray="1 1"/>
 <!-- root icon -->
 <g id="rooti">
 <path d="M30.5 210.5 L32.5 208.5 H39.5 V215.5 L37.5 217.5 H30.5 Z" fill="#8cb4e8" stroke="#111"/>
 <path d="M30.5 210.5 H37.5 L39.5 208.5 M37.5 210.5 V217.5" fill="none" stroke="#111" stroke-width="0.8"/>
 <path d="M38 211 L39 210 V215 L38 216.5 Z" fill="#2a5aa8"/>
 <rect x="30.5" y="217.5" width="7" height="6" fill="#ffd020" stroke="#b04a10"/>
 <path d="M37.5 217.5 L39.5 215.5 H45.5 V221.5 L43.5 223.5 H37.5 Z" fill="#ffd020" stroke="#b04a10"/>
 <path d="M37.5 217.5 H43.5 L45.5 215.5 M43.5 217.5 V223.5" fill="none" stroke="#b04a10" stroke-width="0.8"/>
 <path d="M44 218 L45 217 V221 L44 222.5 Z" fill="#c8b020"/>
 </g>
 <!-- link icons -->
 <g id="lk">
 <rect x="49.5" y="226.5" width="14" height="14" fill="#f4f6fa" stroke="#111"/>
 <path d="M50 228 H63" stroke="#3a6ab8" stroke-width="1.6"/>
 <path d="M60 230 V239" stroke="#b8c4d8" stroke-width="2"/>
 <path d="M48.5 233.5 L50.5 231.5 H57.5 V239.5 L55.5 241.5 H48.5 Z" fill="#ffd020" stroke="#7a5a30"/>
 <path d="M48.5 233.5 H55.5 L57.5 231.5 M55.5 233.5 V241.5" fill="none" stroke="#7a5a30" stroke-width="0.8"/>
 <path d="M49 233 L51 231.8 H57 L55.3 233.3 Z" fill="#f0e0a0"/>
 </g>
 <use href="#lk" y="72"/>
 <!-- insert icons -->
 <g id="ins">
 <path d="M50.5 250 V246.5 Q50.5 244.5 52.5 244.5 H60.5 Q62.5 244.5 62.5 246.5 V250" fill="#6a9ad8" stroke="#111"/>
 <rect x="48.5" y="248.5" width="15" height="10.5" rx="1" fill="#e4ecf8" stroke="#111"/>
 <rect x="52.5" y="248" width="7" height="8" fill="#6a9ad8"/>
 <path d="M52.5 248.5 V259 M59.5 248.5 V259" stroke="#f02020" stroke-width="1.2"/>
 <path d="M53 256.5 H59" stroke="#fff" stroke-width="1.5"/>
 </g>
 <use href="#ins" y="18"/>
 <!-- pin -->
 <path d="M49.5 282 V293 A7 2.5 0 0 0 63.5 293 V282" fill="#a8b4c8" stroke="#555"/>
 <ellipse cx="56.5" cy="282" rx="7" ry="2.5" fill="#e4e8f0" stroke="#555"/>
 <path d="M54 284 V294" stroke="#fff" stroke-width="2" opacity="0.7"/>
</svg>
<div class="t tr" style="left:49.5px;top:210.5px">Root &lt;Chain&gt;</div>
<div class="t tr" style="left:67.5px;top:228.5px">link_2 &lt;link&gt;</div>
<div class="t tr" style="left:67.5px;top:246.5px;letter-spacing:0.3px">Insert_2 &lt;IvInse...</div>
<div class="t tr" style="left:67.5px;top:264.5px;letter-spacing:0.3px">Insert_1 &lt;IvInse...</div>
<div class="t tr" style="left:67.5px;top:282.5px">pin_1 &lt;IvCylinder&gt;</div>
<div class="t tr" style="left:67.5px;top:300.5px">link_1 &lt;link&gt;</div>
<!-- properties panel -->
<div class="a" style="left:12px;top:428px;width:154px;height:198px;border:1px solid #a08878;background:#ece4d4"></div>
<div class="a" style="left:13px;top:429px;width:152px;height:21px;background:linear-gradient(#fbf8f2,#ede6d8);border-bottom:1px solid #b09888"></div>
<div class="t" style="left:18.5px;top:435.5px;font-size:10.9px;line-height:1;color:#7a5a4a">Properties</div>
<div class="a" style="left:146px;top:431px;width:17px;height:17px;border:1px solid #8a7060;border-radius:2px;background:#fcfaf6"></div>
<svg class="a" style="left:149px;top:434px" width="11" height="11"><path d="M2 2 L9 9 M9 2 L2 9" stroke="#6a5040" stroke-width="2"/></svg>
<div class="a" style="left:13px;top:450px;width:152px;height:27px;background:linear-gradient(#fdfdfd,#ececec)"></div>
<div class="a" style="left:14.5px;top:453px;width:22px;height:22px;border:1px solid #4aa0f0;background:#f4f8fc"></div>
<svg class="a" style="left:14px;top:450px" width="44" height="27" viewBox="14 450 44 27">
 <rect x="18.5" y="456.5" width="4" height="4" fill="#fff" stroke="#333"/>
 <rect x="18.5" y="466.5" width="4" height="4" fill="#fff" stroke="#333"/>
 <path d="M20.5 461 V466 M24 458.5 H31 M24 461 H31 M26 463.5 H31 M24 468.5 H31 M24 471 H31" stroke="#555" stroke-dasharray="1 1"/>
 <text x="41" y="462" font-family="Liberation Sans" font-size="9" fill="#111">A</text>
 <text x="41" y="472" font-family="Liberation Sans" font-size="9" fill="#111">Z</text>
 <path d="M50.5 456 V471" stroke="#1a4a8a" stroke-dasharray="1 1"/>
 <path d="M50.5 464 V471 M48 468 L50.5 471.5 L53 468" stroke="#1a4a8a" stroke-width="1.5" fill="none"/>
</svg>
<div class="a" style="left:14px;top:477px;width:150px;height:123px;background:#ececec;border:1px solid #8c9cb0"></div>
<div class="a" style="left:15px;top:478px;width:131px;height:21px;background:linear-gradient(#fafafa,#eeeeee);border-bottom:1px solid #d8d8d8"></div>
<div class="a" style="left:79px;top:480px;width:1px;height:17px;background:#d8d8d8"></div>
<div class="t" style="left:18.5px;top:483.5px;font-size:11.2px;line-height:1;color:#111">Rule</div>
<div class="t" style="left:66px;top:481px;font-size:10px;line-height:1;color:#999">/</div>
<div class="t" style="left:83.5px;top:483.5px;font-size:11.2px;line-height:1;color:#111">Value</div>
<div class="a" style="left:146px;top:478px;width:17px;height:121px;background:#f2f2f2"></div>
<svg class="a" style="left:146px;top:478px" width="17" height="121" viewBox="146 478 17 121">
 <path d="M151.5 489.5 L154.5 486.5 L157.5 489.5" fill="none" stroke="#222" stroke-width="1.2"/>
 <rect x="147.5" y="496.5" width="14" height="35" rx="2" fill="#e8e8e8" stroke="#9a9a9a"/>
 <path d="M151 511.5 H158 M151 513.5 H158 M151 515.5 H158" stroke="#444"/>
 <path d="M151.5 590.5 H158.5 L155 594 Z" fill="#333"/>
</svg>
<div class="a" style="left:15px;top:524px;width:131px;height:1px;background:#a8a8a8"></div>
<div class="a" style="left:15px;top:549px;width:131px;height:1px;background:#a8a8a8"></div>
<div class="a" style="left:15px;top:574px;width:131px;height:1px;background:#a8a8a8"></div>
<svg class="a" style="left:15px;top:500px" width="20" height="100" viewBox="15 500 20 100">
 <g id="pl"><rect x="20.5" y="507.5" width="8" height="8" fill="#f8f8f8" stroke="#8a8a8a"/><path d="M22.5 511.5 H26.5 M24.5 509.5 V513.5" stroke="#2a3a8a"/></g>
 <use href="#pl" y="25"/><use href="#pl" y="50"/><use href="#pl" y="75"/>
</svg>
<div class="t" style="left:33.5px;top:531.5px;font-size:11.2px;line-height:1;color:#111">Inventor</div>
<div class="t" style="left:33.5px;top:556.5px;font-size:11.2px;line-height:1;color:#111">Frame</div>
<div class="t" style="left:33.5px;top:581px;font-size:11.2px;line-height:1;color:#111">Appearance</div>
<!-- tabs -->
<div class="a" style="left:17px;top:602px;width:58px;height:21px;border:1px solid #a08878;border-top:none;border-radius:0 0 4px 4px;background:#fbfaf6"></div>
<div class="a" style="left:76px;top:602px;width:59px;height:21px;border:1px solid #a08878;border-top:none;border-radius:0 0 4px 4px;background:#efe8da"></div>
<div class="t" style="left:20px;top:608px;font-size:11.2px;line-height:1;color:#111">Properties</div>
<div class="t" style="left:79.5px;top:608px;font-size:11.2px;line-height:1;color:#111">Immediate</div>
<!-- right panel -->
<div class="a" style="left:734px;top:145px;width:254px;height:485px;background:#f0f0f0;border-left:1px solid #fafafa"></div>
<div class="a" style="left:738px;top:152px;width:233px;height:1px;background:#a8a8a8"></div><div class="a" style="left:738px;top:155px;width:233px;height:1px;background:#a8a8a8"></div><div class="a" style="left:970px;top:152px;width:1px;height:4px;background:#a8a8a8"></div>
<svg class="a" style="left:975px;top:150px" width="8" height="7"><path d="M1 1 L7 6 M7 1 L1 6" stroke="#111" stroke-width="1.8"/></svg>
<div class="a" style="left:738px;top:161px;width:247px;height:20px;background:#a8a8a8"></div>
<div class="t" style="left:746.5px;top:164.5px;font-size:13.4px;font-weight:bold;color:#f4f4f4;line-height:1">Model</div>
<svg class="a" style="left:786px;top:168px" width="10" height="6"><path d="M1 1 H9 L5 5 Z" fill="#f4f4f4"/></svg>
<svg class="a" style="left:967px;top:163px" width="16" height="16"><path d="M1.5 1.5 H14.5 V12.5 H11 L9 14.5 V12.5 H1.5 Z" fill="#fff8a0" stroke="#111"/><text x="8" y="11.5" font-family="Liberation Sans" font-weight="bold" font-size="11" fill="#10108a" text-anchor="middle">?</text></svg>
<svg class="a" style="left:738px;top:183px" width="190" height="25" viewBox="738 183 190 25">
  <defs><linearGradient id="fun" x1="0" y1="0" x2="1" y2="0"><stop offset="0" stop-color="#707070"/><stop offset="0.5" stop-color="#d8d8d8"/><stop offset="1" stop-color="#808080"/></linearGradient></defs>
 <path d="M742 191 H758 L752.5 198 V204.5 L748 205 V198 Z" fill="url(#fun)" stroke="#111" stroke-width="1.1"/>
 <path d="M742 190.5 H758" stroke="#111" stroke-width="1.8"/>
 <path d="M764.5 187 V207" stroke="#b8b8b8"/>
 <path d="M784 189.5 L779 192.5 L784 195.5" fill="none" stroke="#111" stroke-width="1"/>
 <path d="M782 192.5 H787 V199" fill="none" stroke="#111" stroke-dasharray="1 1"/>
 <rect x="785.5" y="196.5" width="4" height="3" fill="#fff" stroke="#111"/>
 <rect x="784.5" y="200.5" width="3.5" height="3.5" fill="#fff" stroke="#e02020"/>
 <path d="M890 195.5 H897.5 L893.8 199.5 Z" fill="#111"/>
 <path d="M906.5 196 L908 191.5 H911 V196 Z M914 196 V191.5 H917 L918.5 196 Z" fill="#111"/>
 <rect x="905.5" y="196" width="6" height="7.5" fill="#111"/>
 <rect x="913.5" y="196" width="6" height="7.5" fill="#111"/>
 <rect x="911" y="193" width="3" height="5" fill="#111"/>
 <path d="M907 199.5 H910 M915 199.5 H918" stroke="#fff"/>
</svg>
<div class="t" style="left:797px;top:191.5px;font-size:11.8px;line-height:1;color:#111">Assembly View</div>
<div class="a" style="left:738px;top:209px;width:247px;height:393px;background:#fff;border:1px solid #8a8a8a"></div>
<svg class="a" style="left:739px;top:210px" width="100" height="180" viewBox="739 210 100 180">
 <path d="M747.5 227 V309 M752 236.5 H758 M752 254.5 H758 M752 272.5 H758 M752 290.5 H758 M752 308.5 H758 M766.5 314 V381 M771 326.5 H778 M771 344.5 H778 M766.5 362.5 H778 M766.5 380.5 H778" stroke="#a0a0a0"/>
 <g id="ex"><rect x="743.5" y="232.5" width="8" height="8" fill="#fff" stroke="#9a9a9a"/><path d="M745.5 236.5 H749.5 M747.5 234.5 V238.5" stroke="#111"/></g>
 <use href="#ex" y="18"/><use href="#ex" y="36"/><use href="#ex" y="54"/>
 <rect x="743.5" y="304.5" width="8" height="8" fill="#fff" stroke="#9a9a9a"/><path d="M745.5 308.5 H749.5" stroke="#111"/>
 <use href="#ex" x="19" y="108"/>
 <use href="#rooti" x="714" y="3"/>
 <!-- representations -->
 <path d="M763.5 231.5 Q763.5 229.5 765.5 229.5 H769 L770.5 231.5 H777.5 V243.5 H763.5 Z" fill="#f8dcb0" stroke="#a07850"/>
 <path d="M766 233.5 V240.5 H769 M766 236.5 H770" stroke="#111" stroke-width="1.1"/>
 <rect x="765" y="232" width="4" height="2" fill="#3a78d0"/>
 <rect x="770" y="235.5" width="5" height="2" fill="#3a78d0"/>
 <rect x="770" y="239.5" width="5" height="2" fill="#3a78d0"/>
 <!-- folders -->
 <g id="fd"><path d="M763.5 249.5 Q763.5 247.5 765.5 247.5 H769 L770.5 249.5 H778.5 V261.5 H763.5 Z" fill="#f8dcb0" stroke="#a07850"/><path d="M764 250.5 H770" stroke="#fff0d8"/></g>
 <use href="#fd" x="19" y="90"/>
 <!-- part cubes -->
 <g id="pc"><path d="M762.5 269.5 L766.5 265.5 H778.5 V277.5 L774.5 281.5 H762.5 Z" fill="#ffe040" stroke="#a85010"/><path d="M762.5 269.5 H774.5 L778.5 265.5 M774.5 269.5 V281.5" fill="none" stroke="#a85010"/><path d="M775 270 L778 267 V277 L775 280.5 Z" fill="#e8a820"/><path d="M763.5 269 L766.8 266 H777 L774 269 Z" fill="#fff4b0"/></g>
 <use href="#pc" y="18"/><use href="#pc" y="36"/>
 <!-- view -->
 <path d="M783.5 320 V331.5 H785" stroke="#111" stroke-width="1.1" fill="none"/>
 <rect x="782" y="319" width="4" height="2" fill="#3a78d0"/>
 <path d="M786 326.5 H790" stroke="#111" stroke-dasharray="1 1"/>
 <rect x="787" y="323" width="4" height="2" fill="#3a78d0"/>
 <rect x="792" y="326" width="4" height="2" fill="#3a78d0"/>
 <rect x="786" y="330" width="4" height="2" fill="#3a78d0"/>
 <!-- inserts -->
 <use href="#ins" x="734" y="110"/>
 <use href="#ins" x="734" y="128"/>
</svg>
<div class="t" style="left:763.5px;top:213px;font-size:11.6px;font-weight:bold;line-height:1;color:#111">Assembly1.iam</div>
<div class="t trr" style="left:781.5px;top:232px">Representations</div>
<div class="t trr" style="left:781.5px;top:250px">Origin</div>
<div class="t trr" style="left:781.5px;top:268px">link_1</div>
<div class="a" style="left:781px;top:285px;width:28px;height:12px;background:#3399ff"></div>
<div class="t trr" style="left:781.5px;top:286px;color:#fff">link_2</div>
<div class="t trr" style="left:781.5px;top:304px">Pin_1</div>
<div class="t trr" style="left:800.5px;top:322px">View:</div>
<div class="t trr" style="left:800.5px;top:340px">Origin</div>
<div class="t trr" style="left:800.5px;top:358px">Insert_1</div>
<div class="t trr" style="left:800.5px;top:376px">Insert_2</div>
<!-- status bar -->
<div class="a" style="left:8px;top:630px;width:980px;height:21px;background:linear-gradient(#ffffff,#f4f4f4 30%,#d4d4d4 70%,#b8b8b8)"></div><div class="a" style="left:8px;top:630px;width:163px;height:1px;background:#8a8a8a"></div><div class="a" style="left:734px;top:630px;width:254px;height:1px;background:#a8a8a8"></div>
<div class="t" style="left:10px;top:637.5px;font-size:11.8px;line-height:1;color:#111">Ready</div>
<div class="t" style="left:899px;top:637.5px;font-size:11.8px;line-height:1;color:#111">3</div>
<div class="t" style="left:937px;top:637.5px;font-size:11.8px;line-height:1;color:#111">3</div>
<div class="a" style="left:929px;top:633px;width:1px;height:17px;background:#c4c4c4"></div>
<div class="a" style="left:968px;top:633px;width:1px;height:17px;background:#c4c4c4"></div>
<svg class="a" style="left:975px;top:640px" width="12" height="10"><path d="M9 2 h1 M9 5 h1 M6 5 h1 M9 8 h1 M6 8 h1 M3 8 h1" stroke="#9a9a9a" stroke-width="1.2"/></svg>
</body></html>
